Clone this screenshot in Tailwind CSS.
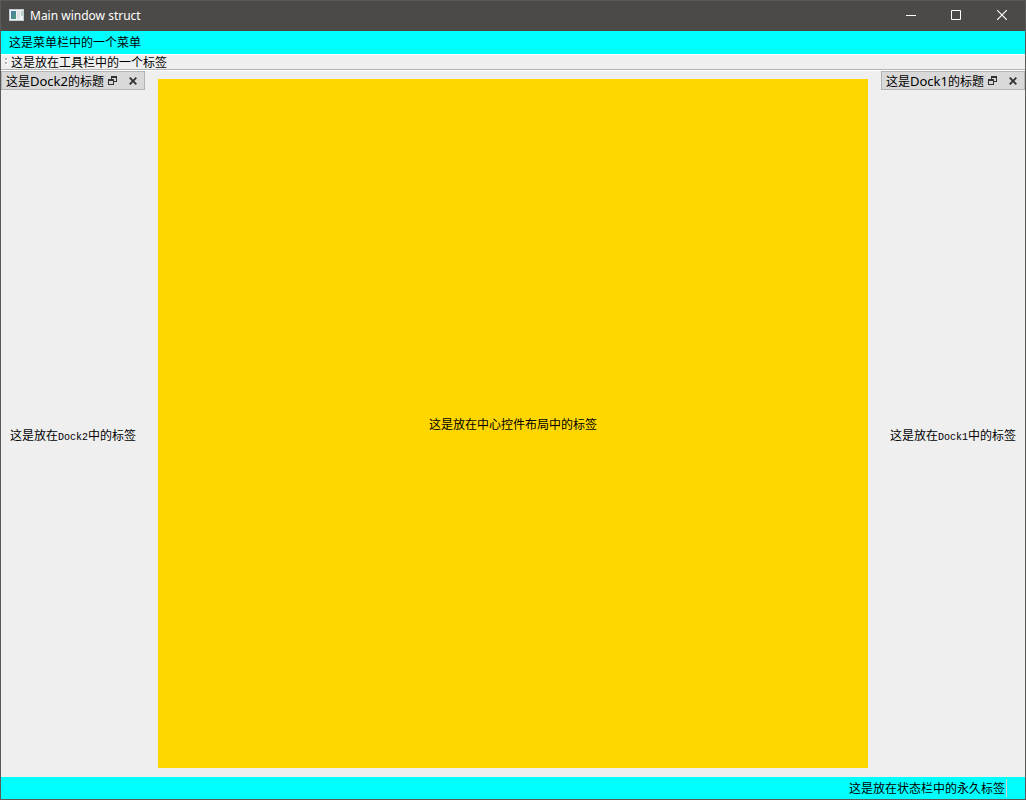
<!DOCTYPE html>
<html lang="zh-CN">
<head>
<meta charset="utf-8">
<meta name="viewport" content="width=device-width, initial-scale=1">
<title>Main window struct</title>
<script src="https://cdn.jsdelivr.net/npm/@tailwindcss/browser@4"></script>
</head>
<body class="flex h-screen flex-col overflow-hidden border border-[#5b5a58] bg-[#efefef] font-['Noto_Sans','Noto_Sans_CJK_SC',sans-serif] text-[12px] leading-4 text-black">
  <header class="flex h-[30px] shrink-0 items-center bg-[#4c4a48] pb-0.5 pl-2 text-white">
    <svg class="mr-1.5 h-3 w-[15px]" viewBox="0 0 15 12" aria-hidden="true">
      <defs>
        <linearGradient id="screen" x1="0" y1="0" x2="1" y2="1">
          <stop offset="0" stop-color="#4a78a8"/><stop offset="1" stop-color="#4c9c78"/>
        </linearGradient>
      </defs>
      <path fill="#f1f3f5" d="M0 0h15v12H0z"/>
      <path fill="#c3ccd2" d="M0 0h15v1H0zM0 11h15v1H0zM0 1h1v10H0zM14 1h1v10h-1z"/>
      <path fill="url(#screen)" d="M2 2h5v8H2z"/>
      <path fill="#dfe0e8" d="M8 2h3v8H8z"/>
      <path fill="#b9d0c4" d="M12 2h2v5h-2z"/>
    </svg>
    <h1 class="pt-0.5">Main window struct</h1>
    <div class="ml-auto flex h-full">
      <button type="button" aria-label="Minimize" class="grid w-11 place-items-center"><svg class="size-2.5" viewBox="0 0 10 10"><path fill="#fff" d="M0 5h10v1H0z"/></svg></button>
      <button type="button" aria-label="Maximize" class="grid w-[46px] place-items-center"><svg class="size-2.5" viewBox="0 0 10 10"><path d="M.5.5h9v9h-9z" fill="none" stroke="#fff"/></svg></button>
      <button type="button" aria-label="Close" class="grid w-[46px] place-items-center"><svg class="size-2.5" viewBox="0 0 10 10"><path d="M0 0l10 10M10 0L0 10" fill="none" stroke="#fff" stroke-width="1.2"/></svg></button>
    </div>
  </header>
  <nav class="flex h-[23px] shrink-0 items-center bg-[#00ffff] px-2">
    <button type="button">这是菜单栏中的一个菜单</button>
  </nav>
  <div role="toolbar" class="flex h-4 shrink-0 items-center border-t border-b border-t-white border-b-[#b4b4b4] pl-1">
    <svg class="mr-0.5 h-2 w-1" viewBox="0 0 4 8" aria-hidden="true"><path fill="#fff" d="M1 1h2v2H1zM1 5h2v2H1z"/><path fill="#b4b4b4" d="M0 0h2v2H0zM0 4h2v2H0z"/></svg>
    <span class="pt-0.5">这是放在工具栏中的一个标签</span>
  </div>
  <main class="flex min-h-0 flex-1 gap-[13px] border-t border-white">
    <aside class="flex w-36 shrink-0 flex-col">
      <div class="flex h-[19px] shrink-0 items-center border border-[#b4b4b4] bg-[#d9d9d9] pl-1">
        <h2 class="pt-0.5">这是<span class="text-[13px]">Dock2</span>的标题</h2>
        <button type="button" aria-label="Float" class="ml-auto mr-3"><svg class="block h-[9px] w-[9px]" viewBox="0 0 9 9"><path fill="#333" d="M3 0h6v6H6V5h2V2H4v1H3zM0 3h6v6H0zM1 5v3h4V5z" fill-rule="evenodd"/></svg></button>
        <button type="button" aria-label="Close" class="mr-[7px]"><svg class="block h-2 w-2" viewBox="0 0 8 8"><path d="M.7.7l6.600 6.600M7.300.7L.7 7.300" stroke="#333" stroke-width="1.9"/></svg></button>
      </div>
      <div class="flex flex-1 items-center pt-1.5 pl-[9px]">
        <p>这是放在<span class="font-['Liberation_Mono',monospace] text-[10px]">Dock2</span>中的标签</p>
      </div>
    </aside>
    <section class="mt-2 mb-[9px] flex flex-1 items-center justify-center bg-[#ffd700] pt-0.5">
      <p>这是放在中心控件布局中的标签</p>
    </section>
    <aside class="flex w-36 shrink-0 flex-col">
      <div class="flex h-[19px] shrink-0 items-center border border-[#b4b4b4] bg-[#d9d9d9] pl-1">
        <h2 class="pt-0.5">这是<span class="text-[13px]">Dock1</span>的标题</h2>
        <button type="button" aria-label="Float" class="ml-auto mr-3"><svg class="block h-[9px] w-[9px]" viewBox="0 0 9 9"><path fill="#333" d="M3 0h6v6H6V5h2V2H4v1H3zM0 3h6v6H0zM1 5v3h4V5z" fill-rule="evenodd"/></svg></button>
        <button type="button" aria-label="Close" class="mr-[7px]"><svg class="block h-2 w-2" viewBox="0 0 8 8"><path d="M.7.7l6.600 6.600M7.300.7L.7 7.300" stroke="#333" stroke-width="1.9"/></svg></button>
      </div>
      <div class="flex flex-1 items-center pt-1.5 pl-[9px]">
        <p>这是放在<span class="font-['Liberation_Mono',monospace] text-[10px]">Dock1</span>中的标签</p>
      </div>
    </aside>
  </main>
  <footer class="flex h-[22px] shrink-0 items-center justify-end bg-[#00ffff] pr-[18px]">
    <p class="border-r border-[#d0d0d0] pt-0.5 pr-px">这是放在状态栏中的永久标签</p>
  </footer>
</body>
</html>
